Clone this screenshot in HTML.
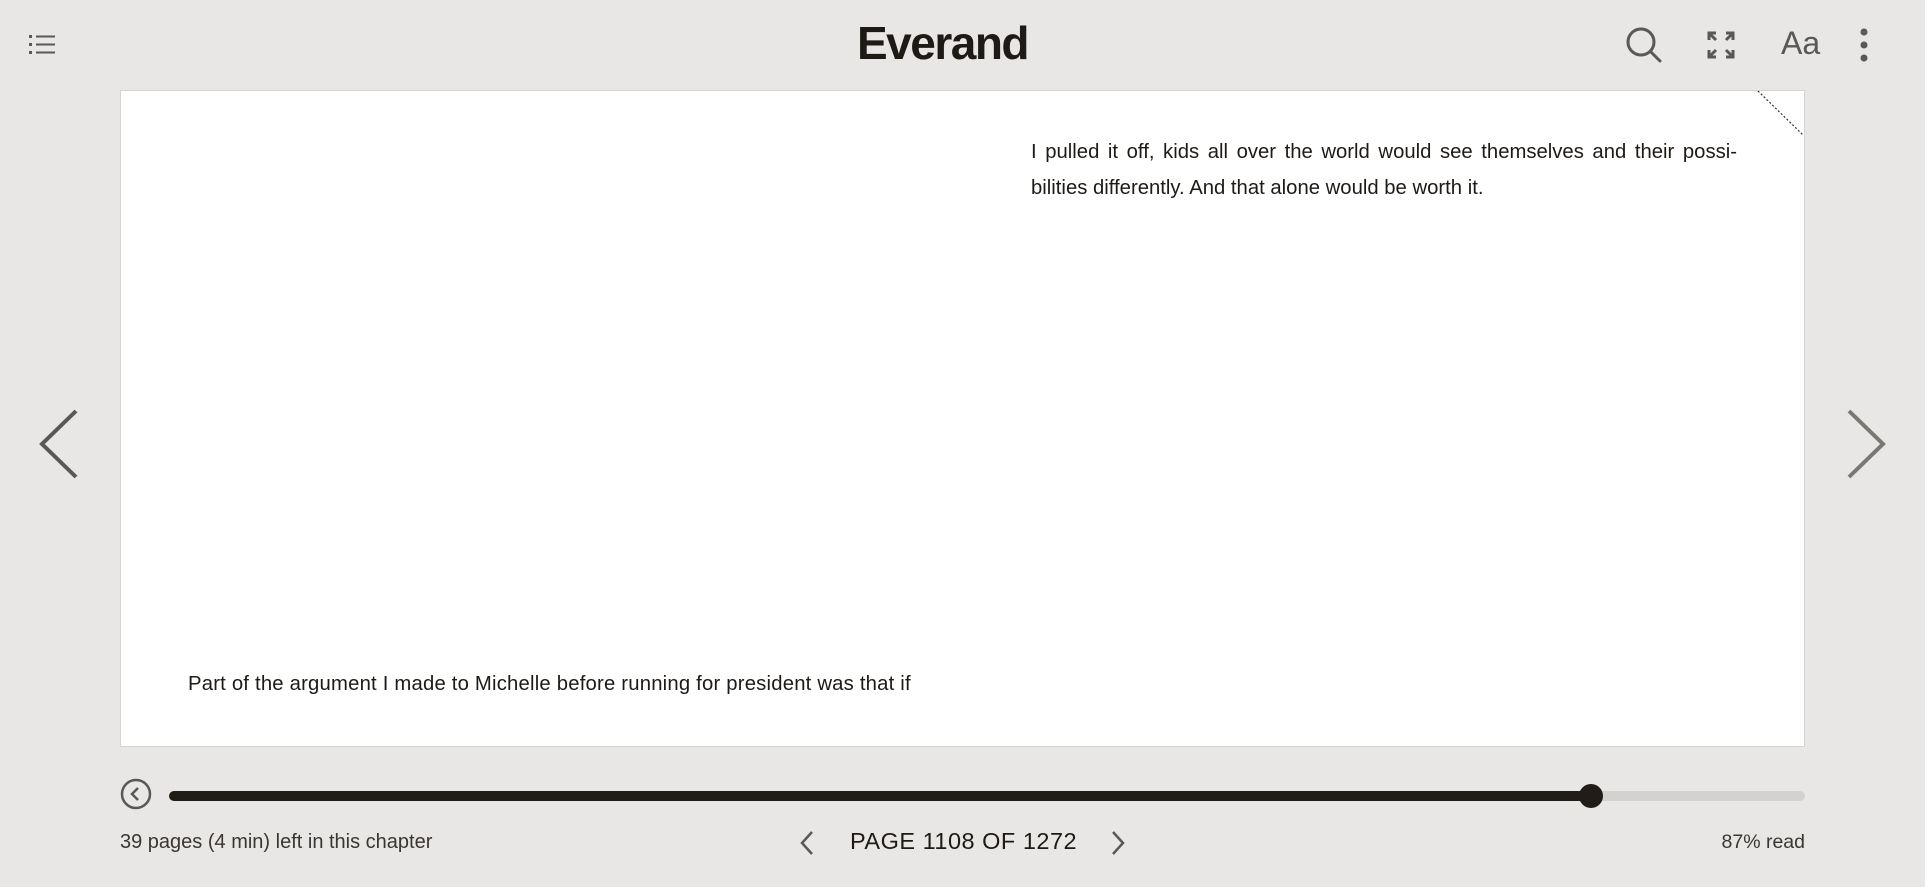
<!DOCTYPE html>
<html><head><meta charset="utf-8"><style>
*{margin:0;padding:0;box-sizing:border-box}
body{width:1925px;height:887px;background:#e8e7e5;font-family:"Liberation Sans",sans-serif;position:relative;overflow:hidden;color:#1e1a15}
.abs{position:absolute}
.page{left:120px;top:90px;width:1685px;height:657px;background:#fff;border:1px solid #d6d4d1}
.txt{font-size:20.3px;line-height:36px;color:#1e1a15}
.logo{left:0;width:1885px;text-align:center;top:16px;font-size:46px;font-weight:bold;letter-spacing:-1.5px;color:#1e1a15}
</style></head><body>
<div class="abs logo">Everand</div>
<svg class="abs" style="left:28px;top:33px" width="30" height="24" viewBox="0 0 30 24" fill="#5a5755">
<rect x="1" y="2" width="3" height="3"/><rect x="8" y="2.5" width="19" height="2"/>
<rect x="1" y="10" width="3" height="3"/><rect x="8" y="10.5" width="19" height="2"/>
<rect x="1" y="18" width="3" height="3"/><rect x="8" y="18.5" width="19" height="2"/></svg>
<svg class="abs" style="left:1625px;top:26px" width="38" height="38" viewBox="0 0 38 38" fill="none" stroke="#5a5755" stroke-width="3"><circle cx="16" cy="16" r="13"/><path d="M25.5 25.5L35 35" stroke-linecap="round"/></svg>
<svg class="abs" style="left:1707px;top:31px" width="28" height="28" viewBox="0 0 28 28" fill="none" stroke="#5a5755" stroke-width="3"><path d="M2 9V2h7M2 2l7 7M26 9V2h-7M26 2l-7 7M2 19v7h7M2 26l7-7M26 19v7h-7M26 26l-7-7"/></svg>
<div class="abs" style="left:1781px;top:25px;font-size:32px;color:#5a5755">Aa</div>
<svg class="abs" style="left:1858px;top:28px" width="12" height="34" viewBox="0 0 12 34" fill="#5a5755"><circle cx="6" cy="4" r="3.5"/><circle cx="6" cy="17" r="3.5"/><circle cx="6" cy="30" r="3.5"/></svg>
<div class="abs page"></div>
<svg class="abs" style="left:1756px;top:90px" width="50" height="46"><path d="M2 1L47 45" stroke="#333" stroke-width="1.2" stroke-dasharray="2 2"/></svg>
<div class="abs txt" style="left:1031px;top:134px;width:706px;text-align:justify;text-align-last:justify">I pulled it off, kids all over the world would see themselves and their possi-</div>
<div class="abs txt" style="left:1031px;top:170px">bilities differently. And that alone would be worth it.</div>
<div class="abs txt" style="left:188px;top:666px;letter-spacing:0.2px">Part of the argument I made to Michelle before running for president was that if</div>
<svg class="abs" style="left:38px;top:408px" width="42" height="72" viewBox="0 0 42 72" fill="none" stroke="#5a5755" stroke-width="4"><path d="M38 3L4 36l34 33"/></svg>
<svg class="abs" style="left:1845px;top:408px" width="42" height="72" viewBox="0 0 42 72" fill="none" stroke="#7a7774" stroke-width="4"><path d="M4 3l34 33L4 69"/></svg>
<svg class="abs" style="left:120px;top:778px" width="32" height="32" viewBox="0 0 32 32" fill="none" stroke="#5a5755" stroke-width="2.5"><circle cx="16" cy="16" r="14"/><path d="M18 10l-6 6 6 6"/></svg>
<div class="abs" style="left:169px;top:791px;width:1636px;height:10px;border-radius:5px;background:#d3d2d0"></div>
<div class="abs" style="left:169px;top:791px;width:1424px;height:10px;border-radius:5px;background:#221c16"></div>
<div class="abs" style="left:1579px;top:784px;width:24px;height:24px;border-radius:50%;background:#221c16"></div>
<div class="abs" style="left:120px;top:831px;font-size:20px;color:#3a3632">39 pages (4 min) left in this chapter</div>
<svg class="abs" style="left:797px;top:829px" width="20" height="28" viewBox="0 0 20 28" fill="none" stroke="#5a5755" stroke-width="2.5"><path d="M15 3L5 14l10 11"/></svg>
<div class="abs" style="left:850px;top:828px;font-size:23.5px;letter-spacing:0.5px;color:#1e1a15">PAGE 1108 OF 1272</div>
<svg class="abs" style="left:1108px;top:829px" width="20" height="28" viewBox="0 0 20 28" fill="none" stroke="#5a5755" stroke-width="2.5"><path d="M5 3l10 11L5 25"/></svg>
<div class="abs" style="right:120px;top:831px;font-size:19.5px;color:#3a3632">87% read</div>
</body></html>
